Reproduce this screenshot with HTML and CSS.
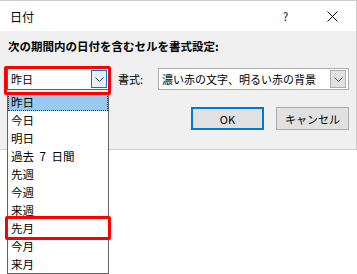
FILE: index.html
```html
<!DOCTYPE html>
<html lang="ja">
<head>
<meta charset="utf-8">
<link rel="stylesheet" href="styles.css">
</head>
<body>
<div class="dialog">
  <div class="titlebar">
    <span class="title">日付</span>
    <span class="help">?</span>
    <span class="close"><svg width="11" height="11" viewBox="0 0 11 11"><path d="M0.5 0.5L10.5 10.5M10.5 0.5L0.5 10.5" stroke="#000" stroke-width="1" fill="none"/></svg></span>
  </div>
  <div class="content">
    <div class="heading">次の期間内の日付を含むセルを書式設定:</div>
    <div class="row">
      <div class="select period">
        <span class="value">昨日</span>
        <span class="arrow active"><svg width="9" height="5" viewBox="0 0 9 5"><path d="M0.5 0.5L4.5 4.5L8.5 0.5" stroke="#333" fill="none"/></svg></span>
      </div>
      <span class="label">書式:</span>
      <div class="select format">
        <span class="value">濃い赤の文字、明るい赤の背景</span>
        <span class="arrow"><svg width="9" height="5" viewBox="0 0 9 5"><path d="M0.5 0.5L4.5 4.5L8.5 0.5" stroke="#555" fill="none"/></svg></span>
      </div>
    </div>
    <div class="buttons">
      <button class="btn default">OK</button>
      <button class="btn">キャンセル</button>
    </div>
  </div>
  <ul class="list">
    <li class="sel">昨日</li>
    <li>今日</li>
    <li>明日</li>
    <li class="spaced">過去 7 日間</li>
    <li>先週</li>
    <li>今週</li>
    <li>来週</li>
    <li>先月</li>
    <li>今月</li>
    <li>来月</li>
  </ul>
  <div class="hl hl-select"></div>
  <div class="hl hl-item"></div>
</div>
</body>
</html>
```

FILE: styles.css
```css
html, body {
  margin: 0;
  padding: 0;
  background: #ffffff;
}
body {
  font-family: "Noto Sans CJK JP", "Noto Sans", sans-serif;
  font-size: 11px;
  color: #000;
  width: 357px;
  height: 274px;
  overflow: hidden;
}
.dialog {
  position: relative;
  width: 356px;
  border-top: 1px solid #cccccc;
  border-right: 1px solid #cccccc;
}
.titlebar {
  height: 30px;
  background: #fff;
  display: flex;
  align-items: center;
  padding-left: 10px;
}
.title {
  font-size: 12px;
  flex: 1;
}
.help {
  font-size: 11px;
  width: 10px;
  margin-right: 34px;
}
.close {
  display: flex;
  margin-right: 18px;
}
.content {
  background: #f0f0f0;
  padding: 7px 7px 19px 7px;
  border-bottom: 1px solid #cfcfcf;
}
.heading {
  font-weight: bold;
  font-size: 11.5px;
  line-height: 16px;
  padding-left: 1px;
}
.row {
  display: flex;
  align-items: center;
  margin-top: 14px;
  height: 22px;
}
.select {
  box-sizing: border-box;
  height: 22px;
  background: #fff;
  display: flex;
  align-items: center;
  justify-content: space-between;
  padding: 0 1px 0 3px;
}
.period {
  width: 102px;
  border: 1px solid #0078d7;
}
.format {
  width: 191px;
  border: 1px solid #adadad;
  padding-right: 2px;
}
.value {
  line-height: 16px;
}
.label {
  width: 40px;
  margin-left: 9px;
  box-sizing: border-box;
}
.arrow {
  box-sizing: border-box;
  width: 16px;
  height: 18px;
  background: #e1e1e1;
  border: 1px solid #adadad;
  display: flex;
  align-items: center;
  justify-content: center;
}
.arrow.active {
  background: #e5f1fb;
  border-color: #0078d7;
}
.buttons {
  display: flex;
  justify-content: flex-end;
  gap: 12px;
  margin-top: 17px;
}
.btn {
  box-sizing: border-box;
  width: 73px;
  height: 23px;
  background: #e1e1e1;
  border: 1px solid #adadad;
  font-family: "Noto Sans CJK JP", "Noto Sans", sans-serif;
  font-size: 11px;
  color: #000;
  padding: 0;
  margin: 0;
}
.btn.default {
  border: 2px solid #0078d7;
}
.list {
  position: absolute;
  left: 7px;
  top: 91px;
  width: 102px;
  box-sizing: border-box;
  margin: 0;
  padding: 0;
  list-style: none;
  background: #fff;
  border: 1px solid #646464;
}
.list li {
  height: 18px;
  line-height: 18px;
  padding-left: 3px;
  box-sizing: border-box;
  font-size: 11.5px;
}
.list li.spaced {
  word-spacing: 3px;
}
.list li.sel {
  background: #99c9ef;
  outline: 1px dotted #333;
  outline-offset: -1px;
}
.hl {
  position: absolute;
  border: 3px solid #ff0000;
  border-radius: 2px;
  box-sizing: border-box;
}
.hl-select {
  left: 4px;
  top: 65px;
  width: 107px;
  height: 29px;
}
.hl-item {
  left: 5px;
  top: 215px;
  width: 106px;
  height: 24px;
}
```
